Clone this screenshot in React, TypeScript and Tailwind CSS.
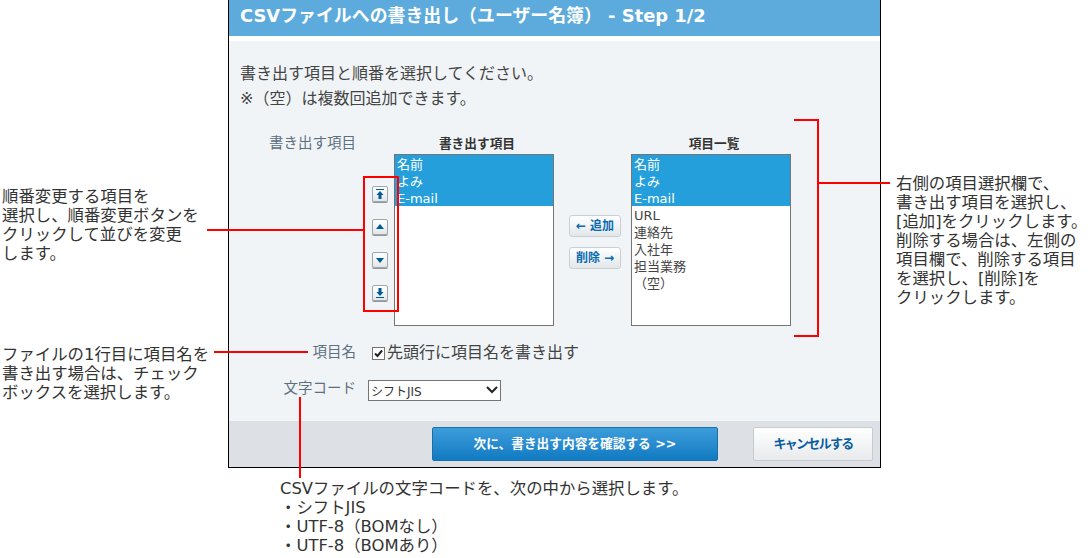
const font = "[font-family:'DejaVu_Sans','Noto_Sans_CJK_JP',sans-serif]";

type Dir = "top" | "up" | "down" | "bottom";

function MoveIcon({ dir }: { dir: Dir }) {
  const paths = {
    top: "M2 1h8v1H2zM6 3l3.5 4H7.5v4h-3V7H2.5z",
    up: "M6 3l4 5H2z",
    down: "M2 4h8L6 9z",
    bottom: "M2 10h8v1H2zM6 9L2.5 5h2V1h3v4h2z",
  };
  return (
    <svg width="12" height="12" viewBox="0 0 12 12" fill="#005a96" stroke="none">
      <path d={paths[dir]} />
    </svg>
  );
}

function MoveButton({ dir }: { dir: Dir }) {
  return (
    <div className="w-4 h-4 flex items-center justify-center rounded-[2px] border border-[#a0a6aa] bg-gradient-to-b from-white to-[#e3e6e8] shadow-[0_1px_0_#8f979c]">
      <MoveIcon dir={dir} />
    </div>
  );
}

function ListBox({ selected, rest }: { selected: string[]; rest: string[] }) {
  return (
    <div className="w-40 h-[172px] border border-[#757575] bg-white text-[13px] leading-[19px] text-[#444]">
      <div className="bg-[#259fdb] text-white pl-[2px]">
        {selected.map((s) => (
          <div key={s} className="h-[17px]">{s}</div>
        ))}
      </div>
      <div className="pl-[2px]">
        {rest.map((s) => (
          <div key={s} className="h-[17px]">{s}</div>
        ))}
      </div>
    </div>
  );
}

function SideButton({ children }: { children: React.ReactNode }) {
  return (
    <div className="w-[52px] h-[22px] flex items-center justify-center whitespace-nowrap rounded-[3px] border border-[#c8d0d4] bg-gradient-to-b from-white to-[#e3e7ea] text-[12px] font-bold text-[#0a6cb0]">
      {children}
    </div>
  );
}

function Note({ className, lines }: { className: string; lines: string[] }) {
  return (
    <div className={`absolute whitespace-nowrap text-[#333] text-[16.4px] leading-[19px] ${className}`}>
      {lines.map((l) => (
        <div key={l}>{l}</div>
      ))}
    </div>
  );
}

function RedLine({ className }: { className: string }) {
  return <div className={`absolute bg-[#ff0000] ${className}`} />;
}

export default function App() {
  return (
    <div className={`relative w-[1090px] h-[558px] overflow-hidden bg-white ${font}`}>
      <div className="ml-[228px] w-[653px] h-[468px] flex flex-col border border-black border-t-0 bg-white">
        <div className="h-9 flex items-center pl-[11px] pb-[3px] bg-[#5dabdc] text-white font-bold text-[17.9px] whitespace-nowrap">
          CSVファイルへの書き出し（ユーザー名簿） - Step 1/2
        </div>
        <div className="h-[5px]" />
        <div className="flex-1 bg-[#f0f4f7] flex flex-col">
          <div className="pl-[11px] pt-[20px] text-[16px] leading-[25px] text-[#444]">
            <div>書き出す項目と順番を選択してください。</div>
            <div>※（空）は複数回追加できます。</div>
          </div>
          <div className="mt-[24px] flex items-start h-[192px]">
            <div className="w-[127px] text-right text-[14.5px] leading-[17px] text-[#5c7080]">書き出す項目</div>
            <div className="ml-[16px] pt-[51px] flex flex-col gap-[17px]">
              <MoveButton dir="top" />
              <MoveButton dir="up" />
              <MoveButton dir="down" />
              <MoveButton dir="bottom" />
            </div>
            <div className="ml-[6px]">
              <div className="h-[19px] pl-[6px] text-center text-[12.7px] font-bold leading-[17px] text-[#333]">書き出す項目</div>
              <ListBox selected={["名前", "よみ", "E-mail"]} rest={[]} />
            </div>
            <div className="ml-[15px] pt-[80px] flex flex-col gap-[10px]">
              <SideButton>← 追加</SideButton>
              <SideButton>削除 →</SideButton>
            </div>
            <div className="ml-[10px]">
              <div className="h-[19px] pl-[6px] text-center text-[12.7px] font-bold leading-[17px] text-[#333]">項目一覧</div>
              <ListBox
                selected={["名前", "よみ", "E-mail"]}
                rest={["URL", "連絡先", "入社年", "担当業務", "（空）"]}
              />
            </div>
          </div>
          <div className="mt-[15px] flex items-center h-[22px]">
            <div className="w-[127px] text-right text-[14.5px] text-[#5c7080]">項目名</div>
            <div className="ml-[16px] w-[13px] h-[13px] flex items-center justify-center border border-[#757575] bg-white">
              <svg width="11" height="11" viewBox="0 0 11 11" fill="none" stroke="#222" strokeWidth="2">
                <path d="M2 5.5l2.5 2.5L9 2.5" />
              </svg>
            </div>
            <div className="ml-[2px] text-[16px] text-[#444]">先頭行に項目名を書き出す</div>
          </div>
          <div className="mt-[15px] flex items-start">
            <div className="w-[127px] pt-[1px] text-right text-[14.5px] leading-[17px] text-[#5c7080]">文字コード</div>
            <div className="relative ml-[12px] w-[133px] h-[21px]">
              <select className="appearance-none w-full h-full pl-[2px] pt-[2px] border border-[#757575] bg-white text-[12px] text-[#333]">
                <option>シフトJIS</option>
              </select>
              <svg className="absolute left-[118px] top-[7px]" width="12" height="8" viewBox="0 0 12 8" fill="none" stroke="#222" strokeWidth="2">
                <path d="M1 1l5 5 5-5" />
              </svg>
            </div>
          </div>
          <div className="mt-auto h-[46px] bg-[#dde1e5] flex justify-end gap-[35px] pt-[6px] pr-[7px]">
            <div className="w-[286px] h-[34px] flex items-center justify-center rounded-[2px] border border-[#1a6fa8] bg-gradient-to-b from-[#3c9ddb] to-[#0e7ac2] text-white text-[12.7px] font-bold">
              次に、書き出す内容を確認する &gt;&gt;
            </div>
            <div className="w-[120px] h-[34px] flex items-center justify-center rounded-[2px] border border-[#c5cccf] bg-gradient-to-b from-white to-[#e8eaec] text-[#0a5f9e] text-[13px] tracking-[-1.7px] font-bold">
              キャンセルする
            </div>
          </div>
        </div>
      </div>

      <div className="absolute left-[363px] top-[176px] w-[36px] h-[136px] border-2 border-[#ff0000]" />
      <RedLine className="left-[207px] top-[229px] w-[156px] h-[2px]" />
      <RedLine className="left-[214px] top-[351px] w-[94px] h-[2px]" />
      <RedLine className="left-[299px] top-[397px] w-[2px] h-[81px]" />
      <RedLine className="left-[794px] top-[119px] w-[25px] h-[2px]" />
      <RedLine className="left-[794px] top-[335px] w-[25px] h-[2px]" />
      <RedLine className="left-[817px] top-[119px] w-[2px] h-[218px]" />
      <RedLine className="left-[819px] top-[182px] w-[71px] h-[2px]" />

      <Note
        className="left-[2px] top-[187px]"
        lines={["順番変更する項目を", "選択し、順番変更ボタンを", "クリックして並びを変更", "します。"]}
      />
      <Note
        className="left-[2px] top-[345px]"
        lines={["ファイルの1行目に項目名を", "書き出す場合は、チェック", "ボックスを選択します。"]}
      />
      <Note
        className="left-[896px] top-[174px]"
        lines={[
          "右側の項目選択欄で、",
          "書き出す項目を選択し、",
          "[追加]をクリックします。",
          "削除する場合は、左側の",
          "項目欄で、削除する項目",
          "を選択し、[削除]を",
          "クリックします。",
        ]}
      />
      <Note
        className="left-[280px] top-[479px]"
        lines={["CSVファイルの文字コードを、次の中から選択します。", "・シフトJIS", "・UTF-8（BOMなし）", "・UTF-8（BOMあり）"]}
      />
    </div>
  );
}
